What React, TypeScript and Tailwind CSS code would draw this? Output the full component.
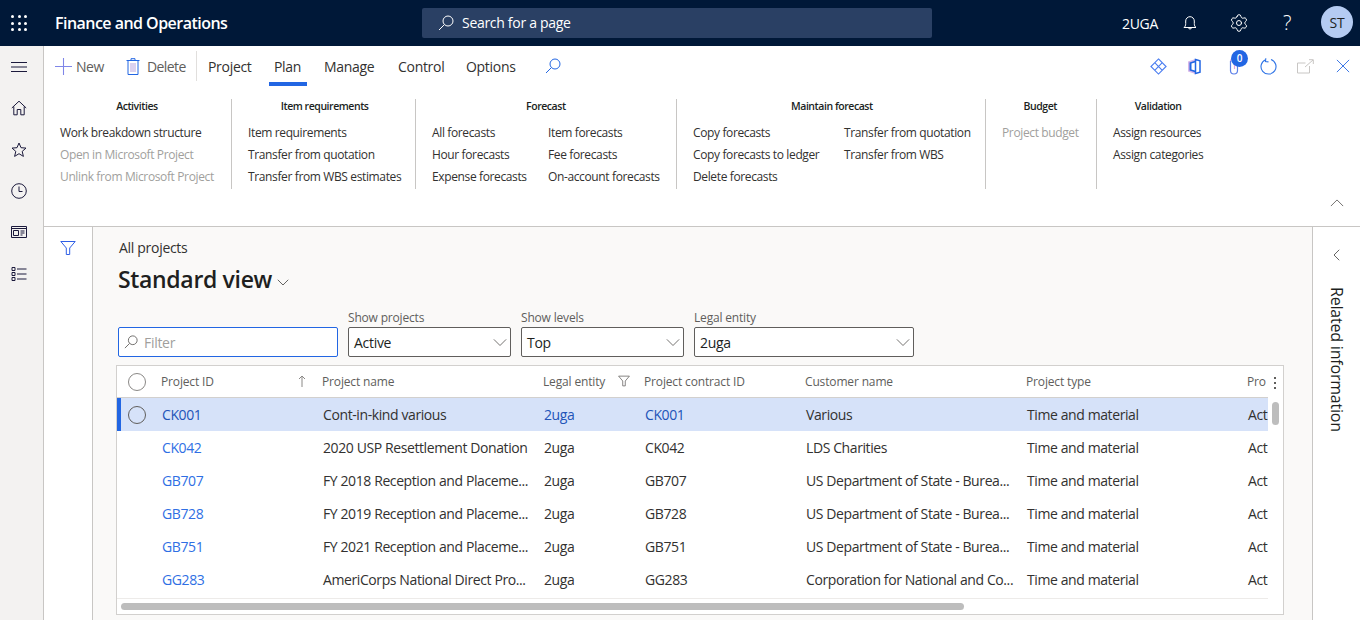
import { ReactNode } from "react";
import { Settings } from "lucide-react";

const rows = [
  ["CK001", "Cont-in-kind various", "2uga", "CK001", "Various"],
  ["CK042", "2020 USP Resettlement Donation", "2uga", "CK042", "LDS Charities"],
  ["GB707", "FY 2018 Reception and Placeme...", "2uga", "GB707", "US Department of State - Burea..."],
  ["GB728", "FY 2019 Reception and Placeme...", "2uga", "GB728", "US Department of State - Burea..."],
  ["GB751", "FY 2021 Reception and Placeme...", "2uga", "GB751", "US Department of State - Burea..."],
  ["GG283", "AmeriCorps National Direct Pro...", "2uga", "GG283", "Corporation for National and Co..."],
];

const Icon = ({ className, size = 16, children }: { className?: string; size?: number; children: ReactNode }) => (
  <svg width={size} height={size} viewBox="0 0 16 16" fill="none" stroke="currentColor" strokeWidth="1" className={className}>
    {children}
  </svg>
);

const Chevron = ({ className }: { className?: string }) => (
  <Icon size={14} className={className}><path d="M1 5l7 7 7-7" /></Icon>
);

const SearchGlass = ({ size = 16, className }: { size?: number; className?: string }) => (
  <Icon size={size} className={className}>
    <circle cx="10" cy="6" r="5" />
    <path d="M6.400 9.600L1 15" />
  </Icon>
);

const FunnelIcon = ({ size = 16, className }: { size?: number; className?: string }) => (
  <Icon size={size} className={className}><path d="M.8 1.500h14.400L9.700 8v6.500H6.300V8z" /></Icon>
);

function Group({ title, width, columns, children }: { title: string; width: string; columns?: boolean; children: ReactNode }) {
  return (
    <div className={`${width} h-[90px] shrink-0 border-r border-[#c8c6c4] pl-4`}>
      <div className="w-fit">
        <div className="text-center text-[10.5px] font-semibold leading-[14px] tracking-[-0.45px] text-[#201f1e]">{title}</div>
        <div className={columns ? "mt-[9px] flex" : "mt-[9px]"}>{children}</div>
      </div>
    </div>
  );
}

const Item = ({ children, off }: { children: ReactNode; off?: boolean }) => (
  <div className={`h-[22px] whitespace-nowrap text-[12px] leading-[22px] tracking-[-0.37px] ${off ? "text-[#a19f9d]" : "text-[#323130]"}`}>{children}</div>
);

const Label = ({ children }: { children: ReactNode }) => (
  <div className="h-[19px] text-[12px] font-medium leading-[19px] tracking-[-0.18px] text-[#605e5c]">{children}</div>
);

function SelectBox({ value, width }: { value: string; width: string }) {
  return (
    <div className={`${width} flex h-[30px] items-center justify-between rounded-[2px] border border-[#605e5c] bg-white pl-[5px] pr-[3px] text-[14px] text-[#201f1e]`}>
      <span>{value}</span>
      <Chevron className="text-[#605e5c]" />
    </div>
  );
}

const Tab = ({ children, active, width }: { children: ReactNode; active?: boolean; width: string }) => (
  <div className={`${width} relative flex h-[40px] items-center text-[14px] font-medium text-[#323130]`}>
    {children}
    {active && <div className="absolute bottom-0 left-[-5px] h-[4px] w-[38px] bg-[#2266e3]" />}
  </div>
);

const railIcon = "text-[#1b1a3c]";
const cell = "shrink-0 pl-[1px]";

export default function App() {
  return (
    <div className="flex h-[620px] w-[1360px] flex-col overflow-hidden bg-white font-['Open_Sans',sans-serif] tracking-[-0.3px]">
      {/* top bar */}
      <header className="flex h-[46px] shrink-0 items-center bg-[#001838] text-white">
        <div className="ml-[11px] grid w-[16px] grid-cols-3 gap-[3.5px]">
          {Array.from({ length: 9 }).map((_, i) => (
            <span key={i} className="h-[3px] w-[3px] rounded-full bg-white" />
          ))}
        </div>
        <div className="mb-[1px] ml-[28px] w-[367px] text-[16px] font-semibold tracking-[-0.53px]">Finance and Operations</div>
        <div className="flex h-[30px] w-[510px] items-center rounded-[2px] bg-[#2a4064] pl-[16px] text-[14px]">
          <SearchGlass />
          <span className="mb-[1px] ml-[8px]">Search for a page</span>
        </div>
        <div className="ml-[190px] w-[60px] text-[14px]">2UGA</div>
        <Icon size={16} className="mb-[1px] mr-[31px]">
          <path d="M2 12.500h12c-1.200-1-1.700-2-1.700-4V6a4.300 4.300 0 0 0-8.600 0v2.500c0 2-.5 3-1.700 4zM6.500 12.500a1.500 1.500 0 0 0 3 0" />
        </Icon>
        <Settings size={20} strokeWidth={1.2} className="mb-[1px] mr-[34px]" />
        <div className="mb-[1px] w-[38px] text-[20px] font-light leading-none">?</div>
        <div className="mb-[2px] flex h-[32px] w-[32px] items-center justify-center rounded-full bg-[#b4cbf2] text-[14px] text-[#201f1e]">ST</div>
      </header>

      <div className="flex min-h-0 flex-1">
        {/* left rail */}
        <nav className="flex w-[44px] shrink-0 flex-col items-center border-r border-[#c8c6c4] bg-[#f3f2f1] pr-[6px]">
          <Icon className={`mt-[13px] ${railIcon}`} size={16}><path d="M0 3.500h16M0 8h16M0 12.500h16" /></Icon>
          <Icon className={`mt-[25px] ${railIcon}`}><path d="M.8 8L8 1.200 15.200 8M2.800 6.500v8.300h3.400V9.500h3.600v5.300h3.400V6.500" /></Icon>
          <Icon className={`mt-[26px] ${railIcon}`}><path d="M8 1l2 4.700 5 .4-3.800 3.300 1.200 5L8 11.700l-4.400 2.700 1.200-5L1 6.100l5-.4z" /></Icon>
          <Icon className={`mt-[25px] ${railIcon}`}><circle cx="8" cy="8" r="7.300" /><path d="M8 3.500V8.500h3.500" /></Icon>
          <Icon className={`mt-[25px] ${railIcon}`}><path d="M.5 2.500h15v11H.5zM.5 4.500h15M2.500 6.500h5v5h-5zM9.500 7h4M9.500 9h4M9.500 11h2" /></Icon>
          <Icon className={`mt-[26px] ${railIcon}`}><path d="M1 1.500h3v3H1zM1 6.500h3v3H1zM1 11.500h3v3H1zM6 3h9.500M6 8h9.500M6 13h9.500" /></Icon>
        </nav>

        <div className="flex min-w-0 flex-1 flex-col">
          {/* ribbon */}
          <section className="h-[181px] shrink-0 border-b border-[#c8c6c4] bg-white">
            <div className="relative flex h-[40px] items-center">
              <Icon size={17} className="ml-[11px] text-[#7f86e8]"><path d="M8 0v16M0 8h16" /></Icon>
              <span className="ml-[4px] w-[50px] text-[14px] tracking-[-0.45px] text-[#605e5c]">New</span>
              <svg width="14" height="17" viewBox="0 0 14 17" fill="none" stroke="#2266e3" strokeWidth="1">
                <path d="M.5 2.500h13M5 2.500V.7h4v1.800M2 2.500v14h10v-14" />
                <path d="M5 5v9M7 5v9M9 5v9" stroke="#b9a4e0" />
              </svg>
              <span className="ml-[7px] w-[49px] text-[14px] tracking-[-0.6px] text-[#605e5c]">Delete</span>
              <div className="mr-[11px] h-[30px] w-[1px] bg-[#e1dfdd]" />
              <Tab width="w-[66px]">Project</Tab>
              <Tab width="w-[50px]" active>Plan</Tab>
              <Tab width="w-[74px]">Manage</Tab>
              <Tab width="w-[68px]">Control</Tab>
              <Tab width="w-[79px]">Options</Tab>
              <SearchGlass className="text-[#2266e3]" />
              <div className="ml-auto mr-[10px] flex items-center">
                <svg width="17" height="17" viewBox="0 0 18 18" fill="none" stroke="#4a7df0" strokeWidth="1.200" className="mr-[20px]">
                  <path d="M9 1l8 8-8 8-8-8zM5 5l8 8M13 5l-8 8" />
                </svg>
                <svg width="14" height="17" viewBox="0 0 14 17" className="mr-[28px]">
                  <path d="M1 3.500L8.500 1v15L1 13.500z" fill="#d6b6ea" />
                  <path d="M2.500 4.500L8 2.800v11.400l-5.500-1.700z" fill="#2266e3" />
                  <path d="M4.500 5.500L8 4.500v8l-3.500-1z" fill="#fff" />
                  <path d="M8.500 1.500L13 2.800v11.400L8.500 15.500z" fill="none" stroke="#2266e3" strokeWidth="1.500" />
                </svg>
                <div className="relative mr-[21px] h-[17px] w-[10px]">
                  <svg width="10" height="17" viewBox="0 0 10 17" fill="none" strokeWidth="1.200">
                    <path d="M8.500 4v8.500a3.500 3.500 0 0 1-7 0V3" stroke="#5b7fe8" />
                    <path d="M1.500 3a2 2 0 0 1 4 0v8" stroke="#e3a6dc" />
                  </svg>
                  <div className="absolute left-[2px] top-[-8px] flex h-[17px] w-[17px] items-center justify-center rounded-full bg-[#2266e3] text-[10px] font-semibold text-white">0</div>
                </div>
                <svg width="17" height="17" viewBox="0 0 17 17" fill="none" stroke="#2f74e6" strokeWidth="1.100" className="mr-[20px]">
                  <path d="M5.500 1.700A7.500 7.500 0 1 0 11 1.500M5.800 .3l-.3 3.200 3 .4" />
                </svg>
                <svg width="17" height="15" viewBox="0 0 17 15" fill="none" stroke="#c8c6c4" strokeWidth="1" className="mr-[22px]">
                  <path d="M12.500 7v7H.5V4h8M8 8l8-7M12 .7h4.300V5" />
                </svg>
                <Icon size={14} className="text-[#2266e3]"><path d="M1 1l14 14M15 1L1 15" /></Icon>
              </div>
            </div>

            <div className="mt-[13px] flex">
              <Group title="Activities" width="w-[188px]">
                <Item>Work breakdown structure</Item>
                <Item off>Open in Microsoft Project</Item>
                <Item off>Unlink from Microsoft Project</Item>
              </Group>
              <Group title="Item requirements" width="w-[184px]">
                <Item>Item requirements</Item>
                <Item>Transfer from quotation</Item>
                <Item>Transfer from WBS estimates</Item>
              </Group>
              <Group title="Forecast" width="w-[261px]" columns>
                <div className="w-[116px]">
                  <Item>All forecasts</Item>
                  <Item>Hour forecasts</Item>
                  <Item>Expense forecasts</Item>
                </div>
                <div>
                  <Item>Item forecasts</Item>
                  <Item>Fee forecasts</Item>
                  <Item>On-account forecasts</Item>
                </div>
              </Group>
              <Group title="Maintain forecast" width="w-[309px]" columns>
                <div className="w-[151px]">
                  <Item>Copy forecasts</Item>
                  <Item>Copy forecasts to ledger</Item>
                  <Item>Delete forecasts</Item>
                </div>
                <div>
                  <Item>Transfer from quotation</Item>
                  <Item>Transfer from WBS</Item>
                </div>
              </Group>
              <Group title="Budget" width="w-[111px]">
                <Item off>Project budget</Item>
              </Group>
              <div className="pl-4">
                <div className="w-fit">
                  <div className="text-center text-[10.5px] font-semibold leading-[14px] tracking-[-0.45px] text-[#201f1e]">Validation</div>
                  <div className="mt-[9px]">
                    <Item>Assign resources</Item>
                    <Item>Assign categories</Item>
                  </div>
                </div>
              </div>
            </div>
            <div className="mr-[16px] mt-[7px] flex justify-end">
              <Icon size={14} className="text-[#605e5c]"><path d="M1 11.500L8 4.500l7 7" /></Icon>
            </div>
          </section>

          <div className="flex min-h-0 flex-1">
            {/* filter rail */}
            <div className="flex w-[49px] shrink-0 justify-center border-r border-[#c8c6c4] bg-white pt-[13px]">
              <FunnelIcon className="text-[#2f5fe6]" />
            </div>

            {/* main content */}
            <main className="min-w-0 flex-1 bg-[#faf9f8] pl-[23px]">
              <div className="pl-[3px] pt-[12px] text-[14px] leading-[18px] text-[#323130]">All projects</div>
              <div className="mt-[6px] flex items-center pl-[2px]">
                <span className="text-[23px] font-semibold leading-[32px] tracking-[-0.33px] text-[#201f1e]">Standard view</span>
                <Chevron className="ml-[5px] mt-[6px] h-[12px] w-[12px] text-[#323130]" />
              </div>

              <div className="ml-[2px] mt-[13px] flex items-end gap-[10px]">
                <div className="flex h-[30px] w-[220px] items-center rounded-[2px] border border-[#2266e3] bg-white pl-[5px] text-[14px] text-[#a19f9d]">
                  <SearchGlass size={14} className="text-[#605e5c]" />
                  <span className="ml-[6px]">Filter</span>
                </div>
                <div>
                  <Label>Show projects</Label>
                  <SelectBox value="Active" width="w-[163px]" />
                </div>
                <div>
                  <Label>Show levels</Label>
                  <SelectBox value="Top" width="w-[163px]" />
                </div>
                <div>
                  <Label>Legal entity</Label>
                  <SelectBox value="2uga" width="w-[220px]" />
                </div>
              </div>

              {/* grid */}
              <div className="relative mt-[8px] h-[250px] w-[1168px] overflow-hidden border border-[#d2d0ce] bg-white">
                <div className="flex h-[32px] w-[1151px] items-center overflow-hidden whitespace-nowrap border-b border-[#d2d0ce] pt-[1px] text-[12px] font-medium tracking-[-0.15px] text-[#605e5c]">
                  <div className="mb-[1px] flex w-[44px] shrink-0 justify-center pr-[4px]">
                    <span className="h-[18px] w-[18px] rounded-full border border-[#8a8886]" />
                  </div>
                  <div className="relative w-[161px] shrink-0">
                    Project ID
                    <svg width="8" height="12" viewBox="0 0 8 12" fill="none" stroke="#8a8886" className="absolute left-[137px] top-[2px]"><path d="M4 12V1M1 4l3-3 3 3" /></svg>
                  </div>
                  <div className="w-[221px] shrink-0">Project name</div>
                  <div className="relative w-[101px] shrink-0">
                    Legal entity
                    <FunnelIcon size={12} className="absolute left-[75px] top-[2px] text-[#605e5c]" />
                  </div>
                  <div className="w-[161px] shrink-0">Project contract ID</div>
                  <div className="w-[221px] shrink-0">Customer name</div>
                  <div className="w-[221px] shrink-0">Project type</div>
                  <div className="w-[21px] shrink-0">Pro</div>
                </div>
                <span className="absolute left-[1157px] top-[11px] flex flex-col gap-[3px]">
                  <i className="h-[2px] w-[2px] bg-[#605e5c]" />
                  <i className="h-[2px] w-[2px] bg-[#605e5c]" />
                  <i className="h-[2px] w-[2px] bg-[#605e5c]" />
                </span>
                {rows.map((row, i) => (
                  <div key={row[0]} className={`flex h-[33px] w-[1151px] items-center overflow-hidden whitespace-nowrap text-[14px] tracking-[-0.4px] text-[#323130] ${i === 0 ? "border-l-[4px] border-[#2266e3] bg-[#d6e2f9]" : "pl-[4px]"}`}>
                    <div className="flex w-[40px] shrink-0 justify-center pr-[9px]">
                      {i === 0 && <span className="h-[18px] w-[18px] rounded-full border border-[#605e5c]" />}
                    </div>
                    <div className={`${cell} w-[161px] ${i === 0 ? "text-[#2254b8]" : "text-[#2f6fe4]"}`}>{row[0]}</div>
                    <div className={`${cell} w-[221px]`}>{row[1]}</div>
                    <div className={`${cell} w-[101px] ${i === 0 ? "text-[#2254b8]" : ""}`}>{row[2]}</div>
                    <div className={`${cell} w-[161px] ${i === 0 ? "text-[#2254b8]" : ""}`}>{row[3]}</div>
                    <div className={`${cell} w-[221px]`}>{row[4]}</div>
                    <div className={`${cell} w-[221px]`}>Time and material</div>
                    <div className={`${cell} w-[21px]`}>Act</div>
                  </div>
                ))}
                <div className="absolute left-[1155px] top-[36px] h-[23px] w-[7px] rounded-full bg-[#bdbdbd]" />
                <div className="absolute bottom-0 left-0 h-[16px] w-[1151px] border-t border-[#edebe9] bg-white" />
                <div className="absolute bottom-[4px] left-[4px] h-[7px] w-[843px] rounded-full bg-[#bdbdbd]" />
              </div>
            </main>

            {/* related information */}
            <aside className="flex w-[48px] shrink-0 flex-col items-center border-l border-[#c8c6c4] bg-white pt-[22px]">
              <Icon size={12} className="text-[#323130]"><path d="M11 1L4 8l7 7" /></Icon>
              <div className="mt-[26px] text-[16px] leading-[20px] tracking-[-0.2px] text-[#201f1e] [writing-mode:vertical-rl]">Related information</div>
            </aside>
          </div>
        </div>
      </div>
    </div>
  );
}
